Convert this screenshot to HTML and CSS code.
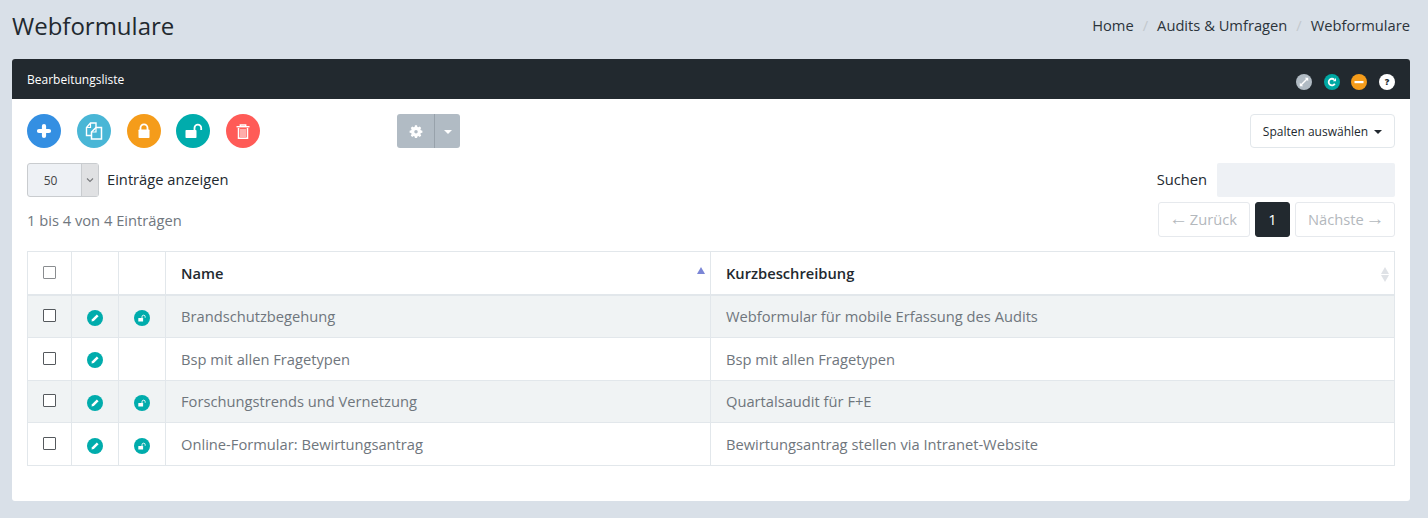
FILE: index.html
```html
<!DOCTYPE html>
<html lang="de">
<head>
<meta charset="utf-8">
<title>Webformulare</title>
<link rel="stylesheet" href="styles.css">
</head>
<body>
<header class="page-head">
  <h1>Webformulare</h1>
  <nav class="crumbs">
    <span>Home</span><i>/</i><span>Audits &amp; Umfragen</span><i>/</i><span>Webformulare</span>
  </nav>
</header>
<main class="card">
  <div class="card-head">
    <span class="card-title">Bearbeitungsliste</span>
    <div class="head-icons">
      <span class="hi grey"><svg viewBox="0 0 16 16"><path d="M4.500 11.500 11.500 4.500" stroke="#fff" stroke-width="1.500"/><path d="M8.800 3.800h3.400v3.400zM3.800 8.800v3.400h3.400z" fill="#fff"/></svg></span>
      <span class="hi teal"><svg viewBox="0 0 16 16"><path d="M10.800 9.800A3.300 3.300 0 1 1 10.200 5.600" fill="none" stroke="#fff" stroke-width="1.800"/><path d="M8.800 7.300h3.200V4.100z" fill="#fff"/></svg></span>
      <span class="hi orange"><svg viewBox="0 0 16 16"><rect x="3.500" y="7" width="9" height="2.200" fill="#fff"/></svg></span>
      <span class="hi white">?</span>
    </div>
  </div>
  <div class="card-body">
    <div class="toolbar">
      <div class="actions">
        <button class="round blue"><svg viewBox="0 0 34 34"><path d="M17 12v10M12 17h10" stroke="#fff" stroke-width="4.200" stroke-linecap="round"/></svg></button>
        <button class="round cyan"><svg viewBox="0 0 34 34"><path d="M14.500 21.500H9.500v-8l4-4.500h5.500v4.500" fill="none" stroke="#fff" stroke-width="1.400"/><path d="M9.500 13.500h4V9" fill="none" stroke="#fff" stroke-width="1.200"/><path d="M19 13.500h5.500v11.500h-10V18z" fill="none" stroke="#fff" stroke-width="1.500"/><path d="M14.500 18h4.500v-4.500" fill="none" stroke="#fff" stroke-width="1.200"/></svg></button>
        <button class="round amber"><svg viewBox="0 0 34 34"><rect x="11.500" y="15.500" width="11" height="8.500" rx=".8" fill="#fff"/><path d="M13.500 16v-2.200a3.500 3.500 0 0 1 7 0v2.200" fill="none" stroke="#fff" stroke-width="1.800"/></svg></button>
        <button class="round green"><svg viewBox="0 0 34 34"><rect x="9.500" y="16" width="11" height="8" rx=".8" fill="#fff"/><path d="M18.500 16.500v-2.600a3.300 3.300 0 0 1 6.700 0v2.100" fill="none" stroke="#fff" stroke-width="1.800"/></svg></button>
        <button class="round red"><svg viewBox="0 0 34 34"><path d="M10.500 12.700h13" stroke="#fff" stroke-width="1.400"/><path d="M14.300 12.500v-1.500h5.400v1.500" fill="none" stroke="#fff" stroke-width="1.400"/><path d="M12.500 14v10.300h9V14" fill="none" stroke="#fff" stroke-width="1.500"/><path d="M15 15v8M17 15v8M19 15v8" stroke="#fff" stroke-width="1"/></svg></button>
      </div>
      <div class="split">
        <span class="split-main"><svg viewBox="0 0 16 16"><path d="M6.800 1.500h2.400l.4 1.800 1.100.5 1.600-1 1.700 1.700-1 1.600.5 1.100 1.800.4v2.400l-1.800.4-.5 1.100 1 1.600-1.700 1.700-1.600-1-1.100.5-.4 1.800H6.800l-.4-1.800-1.100-.5-1.600 1-1.700-1.700 1-1.600-.5-1.100-1.800-.4V7.600l1.800-.4.5-1.100-1-1.600 1.700-1.700 1.600 1 1.100-.5z" fill="#fff"/><circle cx="8" cy="8.800" r="2" fill="#b1bbc4"/></svg></span>
        <span class="split-caret"></span>
      </div>
      <button class="columns">Spalten auswählen<span class="caret"></span></button>
    </div>

    <div class="filter-row">
      <label class="length">
        <span class="select"><span class="sel-val">50</span><span class="sel-arrow"><svg viewBox="0 0 10 6"><path d="M2 1.500 5 4.500 8 1.500" fill="none" stroke="#77797c" stroke-width="1.100"/></svg></span></span>
        Einträge anzeigen
      </label>
      <label class="search">Suchen<span class="search-box"></span></label>
    </div>

    <div class="info-row">
      <span class="info">1 bis 4 von 4 Einträgen</span>
      <div class="pager">
        <span class="page off prev"><span class="arrow">←</span> Zurück</span>
        <span class="page on">1</span>
        <span class="page off next">Nächste <span class="arrow">→</span></span>
      </div>
    </div>

    <table class="list">
      <colgroup><col class="c1"><col class="c2"><col class="c3"><col class="c4"><col></colgroup>
      <thead>
        <tr>
          <th><span class="check head"></span></th><th></th><th></th>
          <th class="sort">Name<span class="arrows"><b class="up active"></b></span></th>
          <th class="sort">Kurzbeschreibung<span class="arrows"><b class="up"></b><b class="down"></b></span></th>
        </tr>
      </thead>
      <tbody>
        <tr class="odd">
          <td><span class="check"></span></td>
          <td><span class="mini"><svg viewBox="0 0 16 16"><path d="M4.500 11.500 5 9.200 9.800 4.400 11.600 6.200 6.800 11z" fill="#fff"/></svg></span></td>
          <td><span class="mini"><svg viewBox="0 0 16 16"><rect x="4.300" y="8" width="4.800" height="3.600" rx=".4" fill="#fff"/><path d="M8 8.300V6.800a1.600 1.600 0 0 1 3.200 0v.9" fill="none" stroke="#fff" stroke-width=".9"/></svg></span></td>
          <td>Brandschutzbegehung</td><td>Webformular für mobile Erfassung des Audits</td>
        </tr>
        <tr>
          <td><span class="check"></span></td>
          <td><span class="mini"><svg viewBox="0 0 16 16"><path d="M4.500 11.500 5 9.200 9.800 4.400 11.600 6.200 6.800 11z" fill="#fff"/></svg></span></td>
          <td></td>
          <td>Bsp mit allen Fragetypen</td><td>Bsp mit allen Fragetypen</td>
        </tr>
        <tr class="odd">
          <td><span class="check"></span></td>
          <td><span class="mini"><svg viewBox="0 0 16 16"><path d="M4.500 11.500 5 9.200 9.800 4.400 11.600 6.200 6.800 11z" fill="#fff"/></svg></span></td>
          <td><span class="mini"><svg viewBox="0 0 16 16"><rect x="4.300" y="8" width="4.800" height="3.600" rx=".4" fill="#fff"/><path d="M8 8.300V6.800a1.600 1.600 0 0 1 3.200 0v.9" fill="none" stroke="#fff" stroke-width=".9"/></svg></span></td>
          <td>Forschungstrends und Vernetzung</td><td>Quartalsaudit für F+E</td>
        </tr>
        <tr>
          <td><span class="check"></span></td>
          <td><span class="mini"><svg viewBox="0 0 16 16"><path d="M4.500 11.500 5 9.200 9.800 4.400 11.600 6.200 6.800 11z" fill="#fff"/></svg></span></td>
          <td><span class="mini"><svg viewBox="0 0 16 16"><rect x="4.300" y="8" width="4.800" height="3.600" rx=".4" fill="#fff"/><path d="M8 8.300V6.800a1.600 1.600 0 0 1 3.200 0v.9" fill="none" stroke="#fff" stroke-width=".9"/></svg></span></td>
          <td>Online-Formular: Bewirtungsantrag</td><td>Bewirtungsantrag stellen via Intranet-Website</td>
        </tr>
      </tbody>
    </table>
  </div>
</main>
</body>
</html>
```
FILE: styles.css
```css
* { box-sizing: border-box; }
html, body { height: 100%; }
body {
  margin: 0;
  padding: 0 18px 0 12px;
  background: #d9e0e8;
  color: #22292f;
  font-family: "Open Sans", "Noto Sans", sans-serif;
  font-size: 14.700px;
  overflow: hidden;
}
.page-head {
  height: 59px;
  display: flex;
  justify-content: space-between;
  align-items: flex-start;
}
.page-head h1 {
  margin: 9px 0 0;
  font-size: 24px;
  line-height: 34px;
  font-weight: 400;
}
.crumbs {
  display: flex;
  gap: 9px;
  margin-top: 15px;
  line-height: 20px;
  color: #2c343b;
}
.crumbs i { font-style: normal; color: #c3c8cd; }
.card {
  height: 442px;
  background: #fff;
  border-radius: 3px;
}
.card-head {
  height: 40px;
  padding: 0 15px;
  background: #22292f;
  border-radius: 3px 3px 0 0;
  display: flex;
  justify-content: space-between;
  color: #fff;
}
.card-title { font-size: 12px; line-height: 41px; }
.head-icons {
  display: flex;
  gap: 11.700px;
  padding-top: 15px;
}
.hi {
  width: 16px;
  height: 16px;
  border-radius: 50%;
  display: block;
  font-size: 9px;
  font-weight: 800;
  line-height: 16px;
  text-align: center;
  color: #22292f;
}
.hi svg { display: block; width: 16px; height: 16px; }
.hi.grey { background: #b1bbc4; }
.hi.teal { background: #00a8a3; }
.hi.orange { background: #f59c1a; }
.hi.white { background: #fff; }
.card-body { padding: 15px; }
.toolbar {
  display: flex;
  align-items: flex-start;
  height: 34px;
}
.actions { display: flex; gap: 15.750px; width: 370px; }
.round {
  width: 34px;
  height: 34px;
  padding: 0;
  border: 0;
  border-radius: 50%;
  display: block;
}
.round svg { display: block; width: 34px; height: 34px; }
.blue { background: #348fe2; }
.cyan { background: #49b6d6; }
.amber { background: #f59c1a; }
.green { background: #00acac; }
.red { background: #ff5b57; }
.split {
  display: flex;
  height: 34px;
  border-radius: 3px;
  overflow: hidden;
  background: #b1bbc4;
}
.split-main {
  width: 38px;
  display: flex;
  align-items: center;
  justify-content: center;
  border-right: 1px solid #98a2ab;
}
.split-main svg { width: 14px; height: 14px; }
.split-caret { width: 25px; position: relative; }
.split-caret::after {
  content: "";
  position: absolute;
  left: 9px;
  top: 16px;
  border: 4px solid transparent;
  border-top-color: #fff;
  border-bottom: 0;
}
.columns {
  margin-left: auto;
  width: 145px;
  height: 34px;
  padding: 0;
  background: #fff;
  border: 1px solid #e2e7eb;
  border-radius: 4px;
  color: #22292f;
  font: 400 12px "Open Sans", sans-serif;
}
.caret {
  display: inline-block;
  margin-left: 6px;
  vertical-align: 2px;
  border: 4px solid transparent;
  border-top-color: #22292f;
  border-bottom: 0;
}
.filter-row {
  display: flex;
  justify-content: space-between;
  margin-top: 15px;
  height: 34px;
}
.length, .search { display: flex; align-items: center; line-height: 32px; padding-bottom: 2px; }
.select {
  width: 72px;
  height: 34px;
  margin: 2px 8px 0 0;
  display: flex;
  background: #eef1f5;
  border: 1px solid #c9cccf;
  border-radius: 3px;
  font-size: 12px;
  color: #444;
}
.sel-val { width: 53px; padding-right: 8px; text-align: center; line-height: 33px; }
.sel-arrow {
  flex: 1;
  background: #e0e1e3;
  border-left: 1px solid #c9cccf;
  display: flex;
  align-items: center;
  justify-content: center;
}
.sel-arrow svg { width: 10px; height: 6px; }
.search-box {
  width: 178px;
  height: 34px;
  margin: 2px 0 0 10px;
  background: #eef1f5;
  border-radius: 2px;
}
.info-row {
  display: flex;
  justify-content: space-between;
  align-items: flex-start;
  margin-top: 5px;
  height: 49px;
}
.info { color: #70777e; line-height: 36px; }
.pager { display: flex; gap: 5px; }
.page {
  height: 35px;
  line-height: 33px;
  padding: 0 12px;
  border: 1px solid #e6e9ed;
  border-radius: 3px;
  white-space: nowrap;
}
.page.off { color: #b3b8bd; }
.page.prev { width: 92px; }
.page.next { width: 100px; }
.page.on { background: #22292f; border-color: #22292f; color: #fff; width: 35px; padding: 0; text-align: center; }
.arrow {
  font-family: "Liberation Sans", sans-serif;
  font-size: 19px;
  line-height: 0;
  margin: 0 -2px;
}
.list {
  width: 100%;
  table-layout: fixed;
  border-collapse: collapse;
  border: 1px solid #e2e7eb;
}
.c1 { width: 44px; }
.c2, .c3 { width: 47px; }
.c4 { width: 545px; }
.list th, .list td {
  border: 1px solid #e2e7eb;
  padding: 0 15px;
  text-align: left;
  color: #6f767d;
}
.list th {
  height: 43px;
  border-bottom-width: 2px;
  color: #22292f;
  font-weight: 600;
  position: relative;
}
.list td { height: 42.800px; }
.list tr.odd td { background: #f0f3f4; }
.list th:nth-child(-n+3), .list td:nth-child(-n+3) { padding: 0; text-align: center; }
.check {
  display: block;
  width: 13px;
  height: 13px;
  margin: 0 auto 0 15px;
  background: #fff;
  border: 1px solid #55595d;
  border-radius: 1px;
}
.list td .check { margin-top: -1px; }
.check.head { border-color: #8a8d90; }
.mini {
  display: block;
  width: 16px;
  height: 16px;
  margin: 3px auto 0;
  border-radius: 50%;
  background: #00acac;
}
.mini svg { display: block; width: 16px; height: 16px; }
.arrows {
  position: absolute;
  right: 4px;
  top: 15px;
  width: 9px;
  height: 16px;
}
.arrows b {
  position: absolute;
  left: 0;
  border-left: 4.500px solid transparent;
  border-right: 4.500px solid transparent;
}
.arrows .up { top: 0; border-bottom: 7px solid #dfe2e6; }
.arrows .down { top: 8px; border-top: 7px solid #dfe2e6; }
.arrows .up.active { border-bottom-color: #7b86d6; }
```
